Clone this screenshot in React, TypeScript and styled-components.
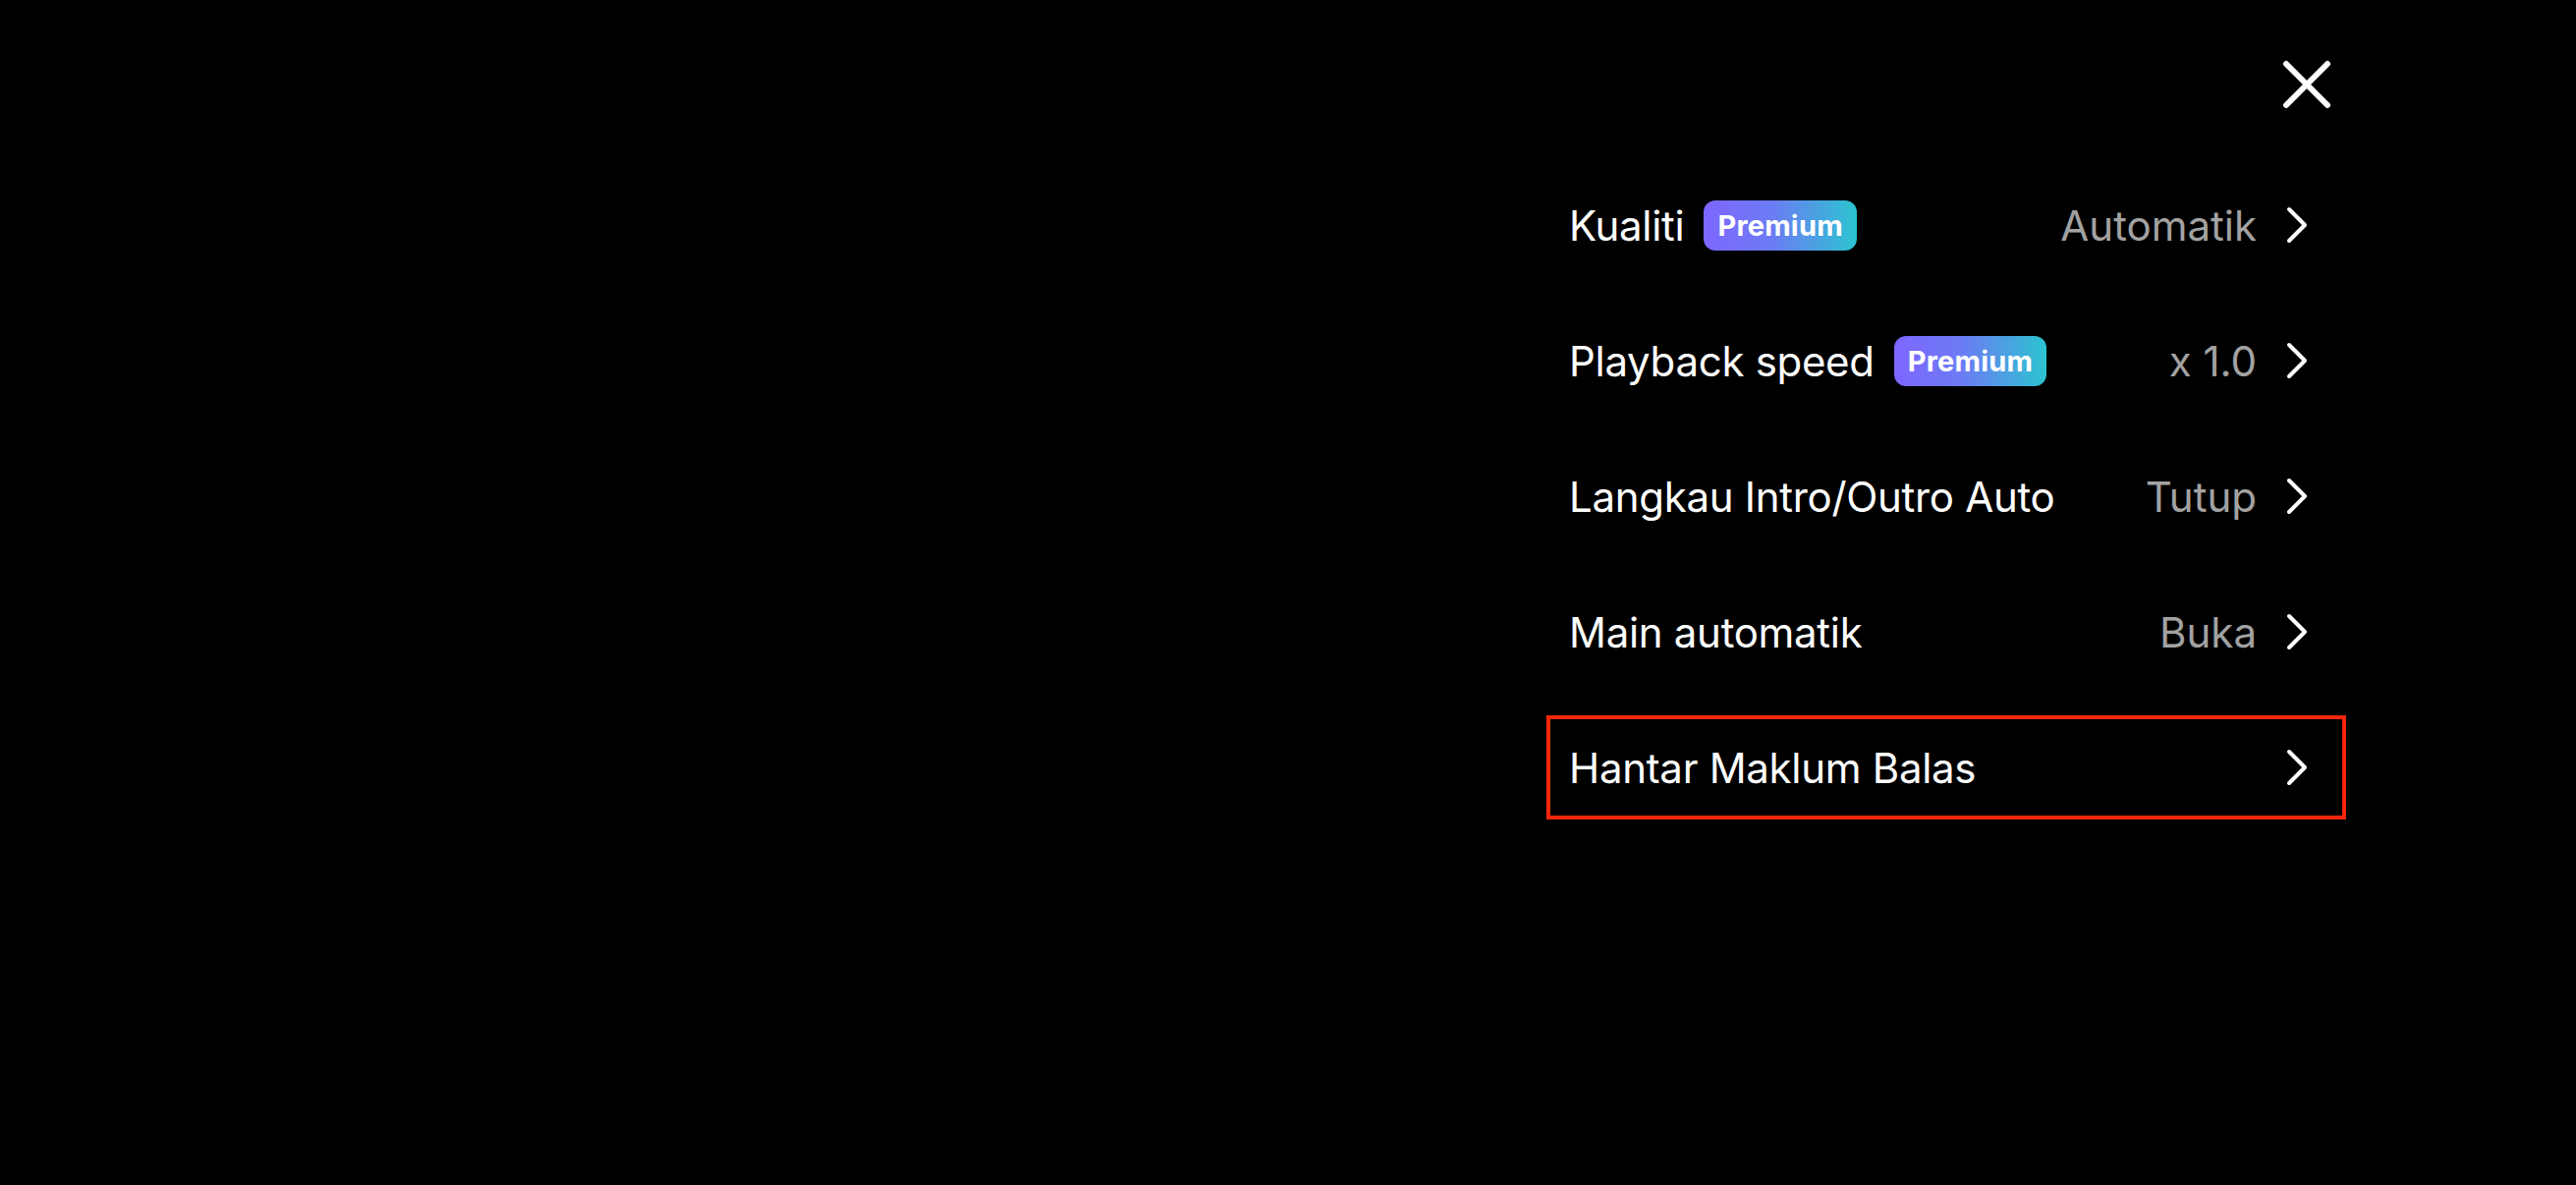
import React from "react";
import styled, { createGlobalStyle } from "styled-components";

const GlobalStyle = createGlobalStyle`
  html, body {
    margin: 0;
    padding: 0;
    background: #000;
  }
  body {
    font-family: Inter, "Noto Sans", "Liberation Sans", sans-serif;
    -webkit-font-smoothing: antialiased;
  }
  * { box-sizing: border-box; }
`;

const Page = styled.div`
  width: 2622px;
  height: 1206px;
  background: #000;
  display: flex;
  justify-content: flex-end;
  padding-right: 234px;
  overflow: hidden;
`;

const Panel = styled.div`
  width: 814px;
  display: flex;
  flex-direction: column;
`;

const Header = styled.div`
  height: 176px;
  display: flex;
  justify-content: flex-end;
  align-items: flex-start;
  padding-top: 61px;
  padding-right: 15px;
`;

const CloseButton = styled.button`
  width: 50px;
  height: 50px;
  padding: 0;
  border: none;
  background: transparent;
  display: flex;
  cursor: pointer;
`;

const List = styled.div`
  display: flex;
  flex-direction: column;
  gap: 32px;
`;

const Row = styled.div<{ $highlight?: boolean }>`
  height: 106px;
  display: flex;
  align-items: center;
  padding: 0 34px 0 19px;
  border: 4px solid ${(p) => (p.$highlight ? "#f5260c" : "transparent")};
  cursor: pointer;
`;

const Label = styled.span`
  color: #fff;
  font-size: 42px;
  font-weight: 400;
  letter-spacing: -0.3px;
  white-space: nowrap;
`;

const Badge = styled.span`
  margin-left: 20px;
  height: 51px;
  padding: 0 14px;
  border-radius: 12px;
  display: inline-flex;
  align-items: center;
  background: linear-gradient(90deg, #7e66ff 0%, #6b7cf4 45%, #2cc4d0 100%);
  color: #fff;
  font-size: 29px;
  font-weight: 700;
  letter-spacing: 0.2px;
  white-space: nowrap;
`;

const Spacer = styled.div`
  flex: 1;
`;

const Value = styled.span`
  color: #a2a2a2;
  font-size: 42px;
  font-weight: 400;
  margin-right: 29px;
  white-space: nowrap;
`;

const Chevron = styled.svg`
  width: 24px;
  height: 40px;
  flex-shrink: 0;
  display: block;
`;

type Item = { label: string; premium?: boolean; value?: string; highlight?: boolean };

const items: Item[] = [
  { label: "Kualiti", premium: true, value: "Automatik" },
  { label: "Playback speed", premium: true, value: "x 1.0" },
  { label: "Langkau Intro/Outro Auto", value: "Tutup" },
  { label: "Main automatik", value: "Buka" },
  { label: "Hantar Maklum Balas", highlight: true },
];

const ChevronIcon = () => (
  <Chevron viewBox="0 0 24 40" fill="none">
    <path d="M4 4 L20 20 L4 36" stroke="#fff" strokeWidth="4" strokeLinecap="round" strokeLinejoin="round" />
  </Chevron>
);

export default function App() {
  return (
    <>
      <GlobalStyle />
      <Page>
        <Panel>
          <Header>
            <CloseButton aria-label="Tutup">
              <svg width="50" height="50" viewBox="0 0 50 50" fill="none">
                <path d="M4 4 L46 46 M46 4 L4 46" stroke="#fff" strokeWidth="6" strokeLinecap="round" />
              </svg>
            </CloseButton>
          </Header>
          <List>
            {items.map((it) => (
              <Row key={it.label} $highlight={it.highlight}>
                <Label>{it.label}</Label>
                {it.premium && <Badge>Premium</Badge>}
                <Spacer />
                {it.value && <Value>{it.value}</Value>}
                <ChevronIcon />
              </Row>
            ))}
          </List>
        </Panel>
      </Page>
    </>
  );
}
